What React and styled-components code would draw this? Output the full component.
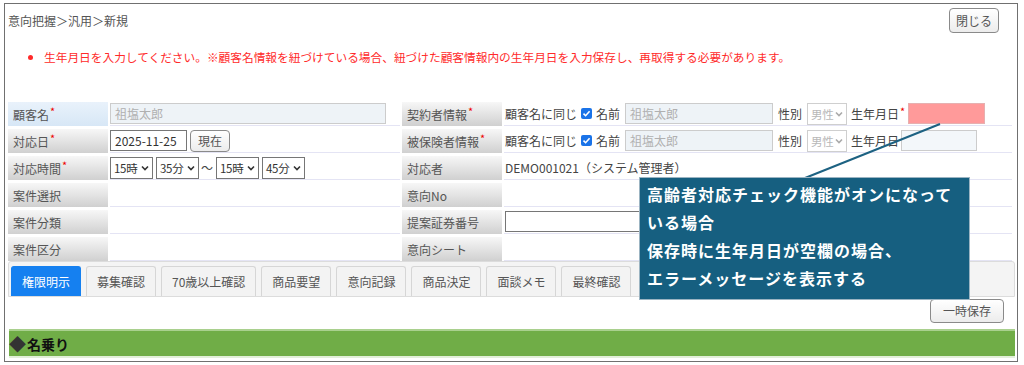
import React from "react";
import styled, { createGlobalStyle } from "styled-components";

const GlobalStyle = createGlobalStyle`
  body {
    margin: 0;
    background: #fff;
    font-family: "Noto Sans CJK JP", "Noto Sans", sans-serif;
    font-size: 12px;
    color: #555;
  }
`;

const Page = styled.div`
  position: relative;
  width: 1024px;
  height: 365px;
  padding: 3px 6px 0 4px;
  box-sizing: border-box;
`;

const Frame = styled.div`
  height: 359px;
  border: 1px solid #707070;
  box-sizing: border-box;
  padding: 0 2px 0 3px;
  overflow: hidden;
`;

const Header = styled.div`
  display: flex;
  justify-content: space-between;
  align-items: flex-start;
  height: 36px;
`;

const Breadcrumb = styled.div`
  margin-top: 8px;
  line-height: 18px;
  color: #555;
`;

// generic grey rounded button
const Button = styled.button`
  height: ${(p) => p.$h || 24}px;
  padding: 0 ${(p) => p.$px ?? 10}px;
  border: 1px solid #8a8a8a;
  border-radius: 4px;
  background: linear-gradient(#ffffff, #ececec);
  color: #555;
  font-family: inherit;
  font-size: 12px;
  line-height: 1;
  white-space: nowrap;
  cursor: pointer;
`;

const CloseButton = styled(Button)`
  margin-top: 4px;
  margin-right: 16px;
  width: 50px;
`;

const ErrorList = styled.ul`
  margin: 8px 0 0;
  padding-left: 36px;
  line-height: 18px;
  font-size: 11.7px;
  color: #ff2a2a;
`;

const FormGrid = styled.div`
  display: grid;
  grid-template-columns: 100px 290px 100px 1fr;
  grid-auto-rows: 24px;
  column-gap: 2px;
  row-gap: 3px;
  margin-top: 36px;
  padding-right: 3px;
`;

const Label = styled.div`
  display: flex;
  align-items: center;
  padding-left: 5px;
  color: #555;
  background: ${(p) =>
    p.$active
      ? "linear-gradient(#e9f2fb, #d7e7f6)"
      : "linear-gradient(#f7f7f7, #d0d0d0)"};
`;

const Req = styled.span`
  color: #e00;
  font-size: 11px;
  margin-left: 1px;
  position: relative;
  top: -3px;
`;

const Cell = styled.div`
  display: flex;
  align-items: center;
  gap: ${(p) => p.$gap ?? 3}px;
  padding-left: ${(p) => p.$pl || 0}px;
  border-bottom: 1px solid #e4e4f4;
  box-sizing: border-box;
  color: #444;
  white-space: nowrap;
`;

const TextBox = styled.div`
  width: ${(p) => p.$w}px;
  height: 21px;
  box-sizing: border-box;
  display: flex;
  align-items: center;
  padding: 0 4px;
  border: 1px solid ${(p) => (p.$disabled ? "#cccccc" : "#767676")};
  background: ${(p) => p.$bg || (p.$disabled ? "#eef3f7" : "#fff")};
  color: ${(p) => (p.$disabled ? "#b0b0b0" : "#333")};
  margin-left: ${(p) => p.$ml || 0}px;
`;

const SelectBox = styled.div`
  width: ${(p) => p.$w || 43}px;
  height: 22px;
  box-sizing: border-box;
  display: flex;
  align-items: center;
  justify-content: space-between;
  padding: 0 3px 0 3px;
  border: 1px solid ${(p) => (p.$disabled ? "#cfcfcf" : "#767676")};
  background: #fff;
  color: ${(p) => (p.$disabled ? "#b8b8b8" : "#333")};
  font-size: 11.5px;
  letter-spacing: -0.3px;
  margin-left: ${(p) => p.$ml || 0}px;
`;

const Tilde = styled.span`
  margin: 0 3px 0 2px;
  color: #444;
`;

const Check = styled.span`
  width: 11px;
  height: 11px;
  border-radius: 2px;
  background: #1a73e8;
  display: inline-flex;
  align-items: center;
  justify-content: center;
  margin: 0 1px 0 4px;
`;

const TabBar = styled.div`
  display: flex;
  gap: 5px;
  padding: 4px 2px 0;
  background: #f4f4f4;
  border: 1px solid #dcdcdc;
  border-radius: 3px 3px 0 0;
`;

const Tab = styled.div`
  height: 30px;
  padding: 0 10px;
  display: flex;
  align-items: center;
  box-sizing: border-box;
  border: 1px solid ${(p) => (p.$active ? "#1580f0" : "#d6d6d6")};
  border-bottom: none;
  border-radius: 3px 3px 0 0;
  background: ${(p) => (p.$active ? "#1580f0" : "#f3f3f3")};
  color: ${(p) => (p.$active ? "#fff" : "#555")};
`;

const SaveRow = styled.div`
  display: flex;
  justify-content: flex-end;
  padding-right: 11px;
  margin-top: 2px;
`;

const SectionBar = styled.div`
  margin: 6px 0 0 1px;
  height: 29px;
  box-sizing: border-box;
  background: #70ad47;
  border-top: 2px solid #a9d08e;
  border-bottom: 2px solid #e2efd9;
  display: flex;
  align-items: center;
  font-size: 14px;
  font-weight: bold;
  color: #111;
`;

const Diamond = styled.span`
  color: #333;
  font-size: 17px;
  margin-right: 1px;
`;

const Connector = styled.svg`
  position: absolute;
  left: 0;
  top: 0;
  pointer-events: none;
`;

const Callout = styled.div`
  position: absolute;
  left: 639px;
  top: 177px;
  width: 331px;
  height: 123px;
  box-sizing: border-box;
  padding: 2px 7px;
  background: #165f80;
  border: 1px solid #9bb4c2;
  color: #fff;
  font-size: 16px;
  font-weight: bold;
  letter-spacing: 1px;
  line-height: 28px;
  white-space: nowrap;
`;

const Chevron = ({ color = "#333" }) => (
  <svg width="8" height="6" viewBox="0 0 8 6">
    <polyline points="1,1.5 4,4.5 7,1.5" fill="none" stroke={color} strokeWidth="1.6" />
  </svg>
);

const Select = ({ value, disabled, ...rest }) => (
  <SelectBox $disabled={disabled} {...rest}>
    {value}
    <Chevron color={disabled ? "#aaa" : "#333"} />
  </SelectBox>
);

const CheckMark = () => (
  <Check>
    <svg width="9" height="9" viewBox="0 0 9 9">
      <polyline points="1.5,4.6 3.6,6.7 7.6,2.2" fill="none" stroke="#fff" strokeWidth="1.6" />
    </svg>
  </Check>
);

const tabs = ["権限明示", "募集確認", "70歳以上確認", "商品要望", "意向記録", "商品決定", "面談メモ", "最終確認"];

export default function App() {
  return (
    <Page>
      <GlobalStyle />
      <Frame>
        <Header>
          <Breadcrumb>意向把握＞汎用＞新規</Breadcrumb>
          <CloseButton $h={25} $px={0}>閉じる</CloseButton>
        </Header>

        <ErrorList>
          <li>
            生年月日を入力してください。※顧客名情報を紐づけている場合、紐づけた顧客情報内の生年月日を入力保存し、再取得する必要があります。
          </li>
        </ErrorList>

        <FormGrid>
          <Label $active>顧客名<Req>*</Req></Label>
          <Cell>
            <TextBox $w={276} $disabled>祖塩太郎</TextBox>
          </Cell>
          <Label>契約者情報<Req>*</Req></Label>
          <Cell $pl={1} $gap={0}>
            顧客名に同じ
            <CheckMark />
            <span style={{ marginLeft: 3 }}>名前</span>
            <TextBox $w={148} $disabled $ml={5}>祖塩太郎</TextBox>
            <span style={{ marginLeft: 5 }}>性別</span>
            <Select value="男性" disabled $w={40} $ml={5} />
            <span style={{ marginLeft: 4 }}>生年月日</span>
            <Req>*</Req>
            <TextBox $w={77} $ml={3} $bg="#ff9a9a" style={{ borderColor: "#e6b0b0" }} />
          </Cell>

          <Label>対応日<Req>*</Req></Label>
          <Cell>
            <TextBox $w={77}>2025-11-25</TextBox>
            <Button $h={22} $px={7}>現在</Button>
          </Cell>
          <Label>被保険者情報<Req>*</Req></Label>
          <Cell $pl={1} $gap={0}>
            顧客名に同じ
            <CheckMark />
            <span style={{ marginLeft: 3 }}>名前</span>
            <TextBox $w={148} $disabled $ml={5}>祖塩太郎</TextBox>
            <span style={{ marginLeft: 5 }}>性別</span>
            <Select value="男性" disabled $w={40} $ml={5} />
            <span style={{ marginLeft: 4 }}>生年月日</span>
            <TextBox $w={76} $disabled $ml={2} $bg="#f3f7fa" />
          </Cell>

          <Label>対応時間<Req>*</Req></Label>
          <Cell $gap={0}>
            <Select value="15時" />
            <Select value="35分" $ml={3} />
            <Tilde>～</Tilde>
            <Select value="15時" />
            <Select value="45分" $ml={3} />
          </Cell>
          <Label>対応者</Label>
          <Cell $pl={1}>DEMO001021（システム管理者）</Cell>

          <Label>案件選択</Label>
          <Cell />
          <Label>意向No</Label>
          <Cell />

          <Label>案件分類</Label>
          <Cell />
          <Label>提案証券番号</Label>
          <Cell $pl={1}>
            <TextBox $w={200} />
          </Cell>

          <Label>案件区分</Label>
          <Cell />
          <Label>意向シート</Label>
          <Cell />
        </FormGrid>

        <TabBar>
          {tabs.map((t, i) => (
            <Tab key={t} $active={i === 0}>{t}</Tab>
          ))}
        </TabBar>

        <SaveRow>
          <Button $h={24} $px={12}>一時保存</Button>
        </SaveRow>

        <SectionBar>
          <Diamond>◆</Diamond>名乗り
        </SectionBar>
      </Frame>

      <Connector width="1024" height="365">
        <line x1="805" y1="178" x2="940" y2="124" stroke="#1d6282" strokeWidth="2" />
      </Connector>
      <Callout>
        高齢者対応チェック機能がオンになって<br />
        いる場合<br />
        保存時に生年月日が空欄の場合、<br />
        エラーメッセージを表示する
      </Callout>
    </Page>
  );
}
